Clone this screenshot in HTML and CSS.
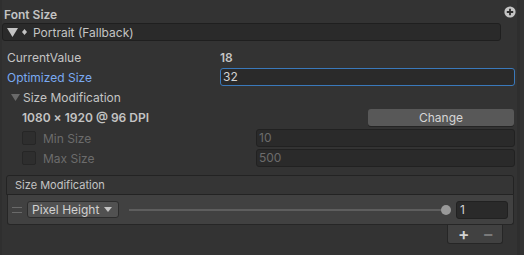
FILE: index.html
```html
<!DOCTYPE html>
<html>
<head>
    <meta charset="utf-8">
    <title>Font Size</title>
    <link rel="stylesheet" href="styles.css">
</head>
<body>
	<div class="inspector">
		<div class="header">
			<span class="title">Font Size</span>
			<svg class="add-icon" width="12" height="12" viewBox="0 0 12 12">
				<circle cx="6" cy="6" r="5.6" fill="#c4c4c4"/>
				<path d="M6 2.8v6.4M2.8 6h6.4" stroke="#2e2e2e" stroke-width="1.8"/>
			</svg>
		</div>
		<div class="foldout-bar">
			<svg class="fold-tri" width="11" height="9" viewBox="0 0 11 9"><path d="M0 0h11L5.5 9z" fill="#c4c4c4"/></svg>
			<svg class="diamond" width="5" height="6" viewBox="0 0 5 6"><path d="M2.5 0L5 3 2.5 6 0 3z" fill="#c4c4c4"/></svg>
			<span>Portrait (Fallback)</span>
		</div>
		<div class="props">
			<div class="row">
				<span class="label">CurrentValue</span>
				<span class="value">18</span>
			</div>
			<div class="row">
				<span class="label focused">Optimized Size</span>
				<div class="field focus">32</div>
			</div>
			<div class="row subfold">
				<svg class="sub-tri" width="9" height="7" viewBox="0 0 9 7"><path d="M0 0h9L4.5 7z" fill="#6a6a6a"/></svg>
				<span>Size Modification</span>
			</div>
			<div class="row indent dpi-row">
				<span class="dpi">1080 x 1920 @ 96 DPI</span>
				<div class="btn">Change</div>
			</div>
			<div class="row indent disabled">
				<span class="check"></span>
				<span class="label">Min Size</span>
				<div class="field">10</div>
			</div>
			<div class="row indent disabled">
				<span class="check"></span>
				<span class="label">Max Size</span>
				<div class="field">500</div>
			</div>
		</div>
		<div class="list">
			<div class="list-header">Size Modification</div>
			<div class="list-item">
				<span class="handle"></span>
				<div class="dropdown">Pixel Height <svg width="8" height="5" viewBox="0 0 8 5"><path d="M0 0h8L4 5z" fill="#c4c4c4"/></svg></div>
				<div class="slider"><span class="thumb"></span></div>
				<div class="int-field">1</div>
			</div>
			<div class="list-footer">
				<span class="plus">+</span>
				<span class="minus">&minus;</span>
			</div>
		</div>
	</div>
</body>
</html>
```

FILE: styles.css
```css
html, body { margin: 0; padding: 0; background: #333; }
body { width: 524px; height: 255px; overflow: hidden; font-family: Inter, "Liberation Sans", sans-serif; font-size: 12px; color: #c4c4c4; }
.inspector { width: 515px; height: 255px; padding-right: 2px; border-right: 3px solid #2e2e2e; box-shadow: inset 2px 0 0 #2f2f2f; box-sizing: content-box; }

.header { display: flex; align-items: center; justify-content: space-between; height: 18px; padding: 5px 0 0 4px; }
.title { font-weight: 600; }
.add-icon { margin-top: -4px; position: relative; left: 1px; }

.foldout-bar { display: flex; align-items: center; height: 16px; width: 497px; margin: 0 0 0 2px; background: #2a2a2a; border: 1px solid #1f1f1f; border-radius: 3px; }
.fold-tri { margin-left: 4px; }
.diamond { margin: 0 6px 0 4px; }

.props { padding: 7px 0 0 7px; }
.row { display: flex; align-items: center; height: 18px; margin-bottom: 2px; }
.label { width: 213px; flex: none; }
.label.focused { color: #7aaaf2; }
.value { font-weight: 600; }
.field { flex: 1; height: 16px; line-height: 16px; padding-left: 2px; background: #2a2a2a; border: 1px solid #212121; border-radius: 3px; }
.field.focus { border-color: #3a79bb; color: #d2d2d2; }
.subfold { padding-left: 4px; }
.sub-tri { margin-right: 3px; }
.indent { padding-left: 15px; }
.dpi-row { margin-bottom: 3px; }
.dpi { font-weight: 600; flex: 1; }
.btn { width: 146px; height: 17px; line-height: 17px; text-align: center; background: #585858; border-radius: 3px; color: #d6d6d6; margin-right: 1px; box-shadow: 0 1px 0 #242424; }
.check { width: 12px; height: 12px; border: 1px solid #262626; background: #2e2e2e; border-radius: 2px; margin-right: 7px; flex: none; }
.disabled .label, .disabled .field { color: #6c6c6c; }

.list { margin: 8px 1px 0 6px; }
.list-header { height: 18px; line-height: 18px; padding-left: 8px; font-size: 11px; border: 1px solid #232323; border-radius: 3px 3px 0 0; background: #353535; }
.list-item { display: flex; align-items: center; height: 29px; margin-left: 1px; background: #414141; border: 1px solid #262626; border-top: none; border-radius: 0 0 3px 3px; }
.handle { width: 10px; height: 4px; border-top: 1px solid #6a6a6a; border-bottom: 1px solid #6a6a6a; margin: 0 5px 0 4px; }
.dropdown { display: flex; align-items: center; gap: 5px; height: 15px; padding: 0 6px 0 4px; background: #515151; border: 1px solid #2c2c2c; border-radius: 3px; color: #d2d2d2; }
.slider { position: relative; flex: 1; height: 2px; margin: 0 12px 0 10px; background: #5e5e5e; }
.thumb { position: absolute; right: -7px; top: -4px; width: 10px; height: 10px; border-radius: 50%; background: #999; }
.int-field { width: 47px; height: 16px; line-height: 16px; padding-left: 3px; background: #2a2a2a; border: 1px solid #212121; border-radius: 3px; margin-right: 5px; color: #d2d2d2; }
.list-footer { display: flex; align-items: center; gap: 13px; width: 56px; height: 19px; margin-left: 441px; padding-left: 10px; box-sizing: border-box; background: #414141; border: 1px solid #262626; border-top: none; border-radius: 0 0 3px 3px; font-size: 17px; font-weight: 600; }
.plus { color: #d2d2d2; }
.minus { color: #7a7a7a; }
```
